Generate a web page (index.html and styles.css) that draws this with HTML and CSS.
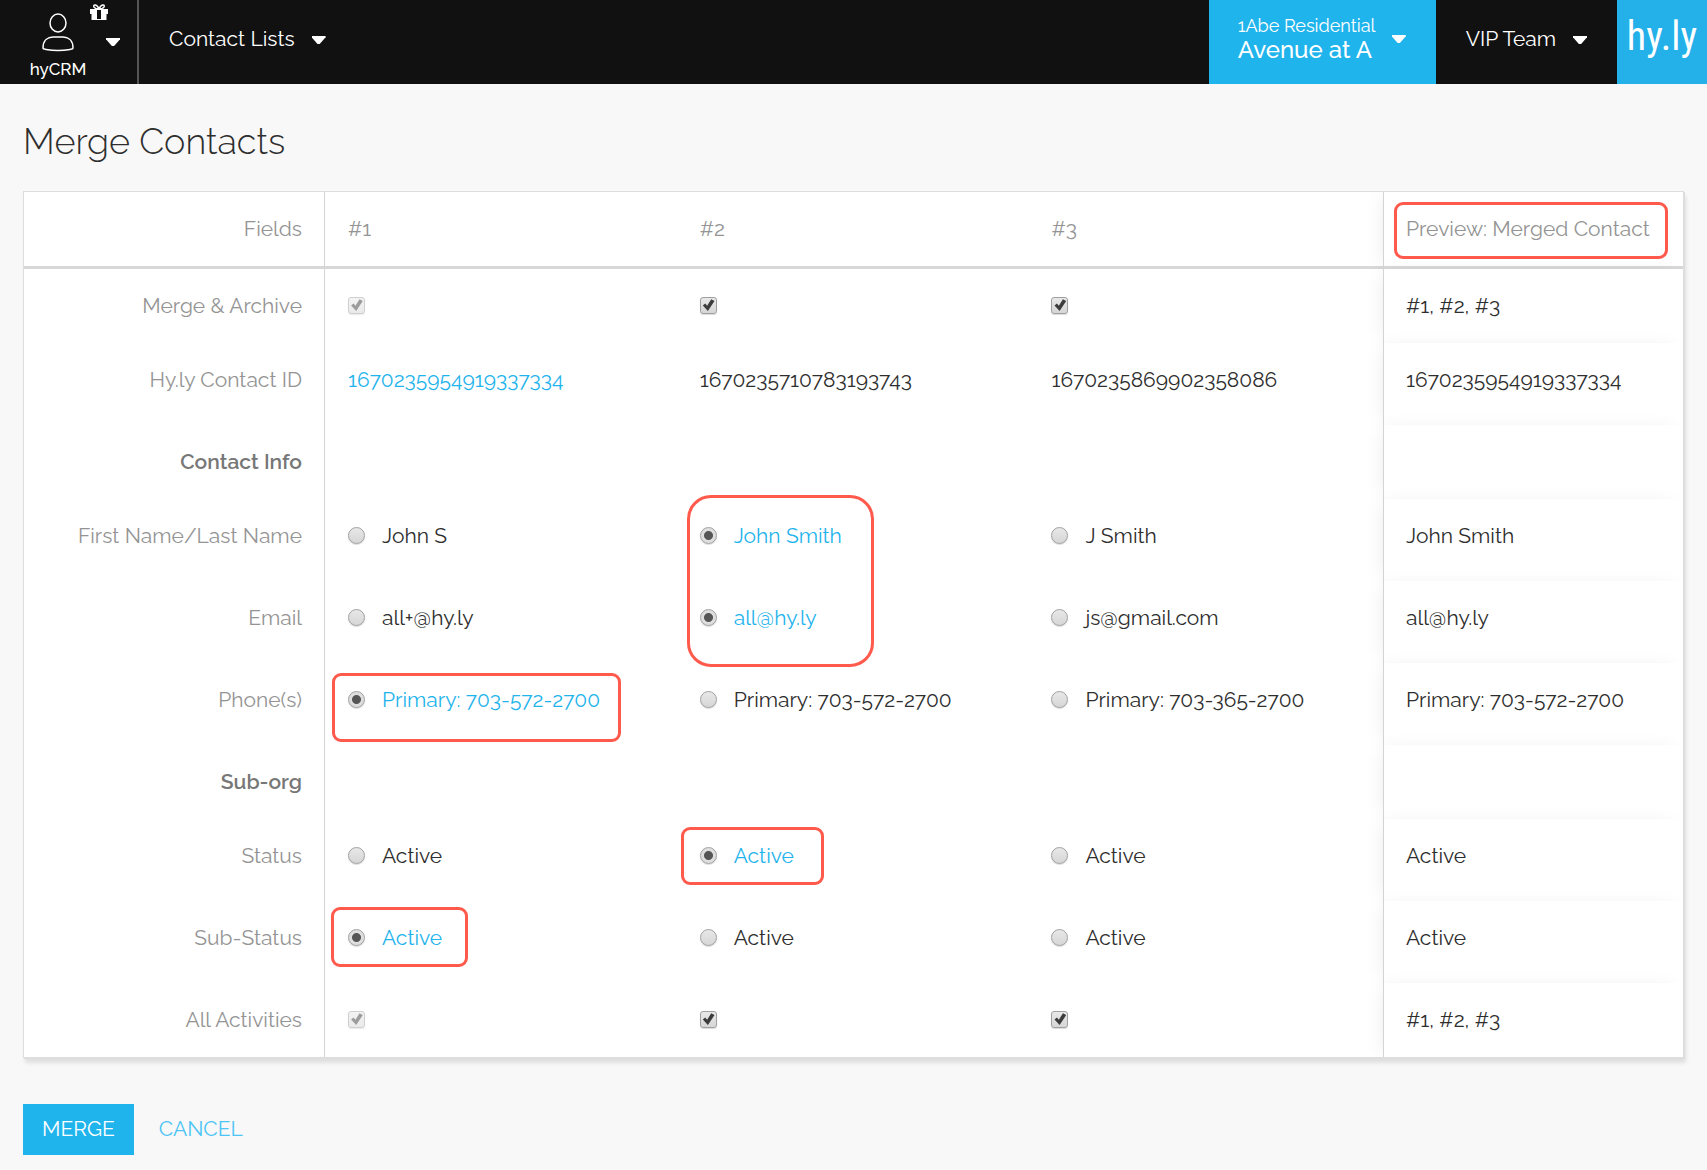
FILE: index.html
```html
<!DOCTYPE html>
<html lang="en">
<head>
    <meta charset="UTF-8">
    <meta name="viewport" content="width=device-width, initial-scale=1.0">
    <title>Merge Contacts</title>
    <link rel="stylesheet" href="styles.css">
</head>
<body>

    <header class="topbar">
        <button type="button" class="app-menu">
            <span class="app-name">
                <svg class="icon-user" viewBox="0 0 32 39" width="32" height="39">
                    <ellipse cx="16" cy="10" rx="8" ry="9"/>
                    <path d="M1 35C1 27 6 24 11 24H21C26 24 31 27 31 35Q31 36 28 36.500Q16 38.500 4 36.500Q1 36 1 35Z"/>
                </svg>
                hyCRM
            </span>
            <span class="app-side">
                <svg class="icon-gift" viewBox="0 0 18 16" width="18" height="16">
                    <path class="bow" d="M9 5C7 0 3 0 4 3Q5 5 9 5C11 0 15 0 14 3Q13 5 9 5Z"/>
                    <path d="M0 5H18V10H16.500V16H1.500V10H0Z"/>
                    <path class="ribbon" d="M7 6H11V15H7Z"/>
                </svg>
                <span class="caret"></span>
            </span>
        </button>
        <nav class="main-nav">
            <button type="button" class="nav-item">Contact Lists <span class="caret"></span></button>
        </nav>
        <button type="button" class="property">
            <span class="property-text">
                <span class="property-org">1Abe Residential</span>
                <span class="property-name">Avenue at A</span>
            </span>
            <span class="caret"></span>
        </button>
        <button type="button" class="nav-item team">VIP Team <span class="caret"></span></button>
        <a href="#" class="logo">hy.ly</a>
    </header>

    <main class="content">
        <h1>Merge Contacts</h1>

        <form>
            <div class="table-box">
                <table class="merge-table">
                    <colgroup>
                        <col class="col-fields">
                        <col class="col-contact">
                        <col class="col-contact">
                        <col>
                        <col class="col-preview">
                    </colgroup>
                    <thead>
                        <tr>
                            <th class="field">Fields</th>
                            <th>#1</th>
                            <th>#2</th>
                            <th>#3</th>
                            <th class="preview">Preview: Merged Contact<span class="mark mark-preview"></span></th>
                        </tr>
                    </thead>
                    <tbody>
                        <tr class="short">
                            <th class="field">Merge &amp; Archive</th>
                            <td><label><input type="checkbox" aria-label="Merge #1" checked disabled></label></td>
                            <td><label><input type="checkbox" aria-label="Merge #2" checked></label></td>
                            <td><label><input type="checkbox" aria-label="Merge #3" checked></label></td>
                            <td class="preview">#1, #2, #3</td>
                        </tr>
                        <tr>
                            <th class="field">Hy.ly Contact ID</th>
                            <td><a href="#">1670235954919337334</a></td>
                            <td>1670235710783193743</td>
                            <td>1670235869902358086</td>
                            <td class="preview">1670235954919337334</td>
                        </tr>
                        <tr class="short">
                            <th class="field section">Contact Info</th>
                            <td></td>
                            <td></td>
                            <td></td>
                            <td class="preview"></td>
                        </tr>
                        <tr>
                            <th class="field">First Name/Last Name</th>
                            <td><label><input type="radio" name="name"><span>John S</span></label></td>
                            <td class="marked"><label><input type="radio" name="name" checked><span>John Smith</span></label><span class="mark mark-name"></span></td>
                            <td><label><input type="radio" name="name"><span>J Smith</span></label></td>
                            <td class="preview">John Smith</td>
                        </tr>
                        <tr>
                            <th class="field">Email</th>
                            <td><label><input type="radio" name="email"><span>all+@hy.ly</span></label></td>
                            <td><label><input type="radio" name="email" checked><span>all@hy.ly</span></label></td>
                            <td><label><input type="radio" name="email"><span>js@gmail.com</span></label></td>
                            <td class="preview">all@hy.ly</td>
                        </tr>
                        <tr>
                            <th class="field">Phone(s)</th>
                            <td class="marked"><label><input type="radio" name="phone" checked><span>Primary: 703-572-2700</span></label><span class="mark mark-phone"></span></td>
                            <td><label><input type="radio" name="phone"><span>Primary: 703-572-2700</span></label></td>
                            <td><label><input type="radio" name="phone"><span>Primary: 703-365-2700</span></label></td>
                            <td class="preview">Primary: 703-572-2700</td>
                        </tr>
                        <tr class="short">
                            <th class="field section">Sub-org</th>
                            <td></td>
                            <td></td>
                            <td></td>
                            <td class="preview"></td>
                        </tr>
                        <tr>
                            <th class="field">Status</th>
                            <td><label><input type="radio" name="status"><span>Active</span></label></td>
                            <td class="marked"><label><input type="radio" name="status" checked><span>Active</span></label><span class="mark mark-status"></span></td>
                            <td><label><input type="radio" name="status"><span>Active</span></label></td>
                            <td class="preview">Active</td>
                        </tr>
                        <tr>
                            <th class="field">Sub-Status</th>
                            <td class="marked"><label><input type="radio" name="substatus" checked><span>Active</span></label><span class="mark mark-substatus"></span></td>
                            <td><label><input type="radio" name="substatus"><span>Active</span></label></td>
                            <td><label><input type="radio" name="substatus"><span>Active</span></label></td>
                            <td class="preview">Active</td>
                        </tr>
                        <tr class="short">
                            <th class="field">All Activities</th>
                            <td><label><input type="checkbox" aria-label="Activities #1" checked disabled></label></td>
                            <td><label><input type="checkbox" aria-label="Activities #2" checked></label></td>
                            <td><label><input type="checkbox" aria-label="Activities #3" checked></label></td>
                            <td class="preview">#1, #2, #3</td>
                        </tr>
                    </tbody>
                </table>
            </div>

            <div class="actions">
                <button type="submit" class="btn-merge">MERGE</button>
                <a href="#" class="btn-cancel">CANCEL</a>
            </div>
        </form>
    </main>

</body>
</html>
```

FILE: styles.css
```css
* {
    box-sizing: border-box;
}

body {
    margin: 0;
    background-color: #f8f8f8;
    color: #2e2e2e;
    font-family: Raleway, Lato, sans-serif;
    font-size: 21px;
    line-height: 30px;
}

a {
    color: #1fb4ec;
    text-decoration: none;
}

button {
    border: none;
    background: none;
    padding: 0;
    color: white;
    font: inherit;
    cursor: pointer;
}

/* Top bar */
.topbar {
    display: flex;
    height: 84px;
    background-color: #111;
}

.caret {
    width: 14px;
    height: 8px;
    background-color: white;
    clip-path: polygon(0 0, 100% 0, 100% 15%, 58% 100%, 42% 100%, 0 15%);
}

.app-menu {
    display: flex;
    width: 139px;
    padding-left: 30px;
    border-right: 2px solid #555;
}

.app-name {
    display: flex;
    flex-direction: column;
    align-items: center;
    width: 56px;
    padding-top: 13px;
    font-size: 17px;
    font-weight: 500;
    line-height: 34px;
}

.icon-user {
    flex: none;
    fill: none;
    stroke: white;
    stroke-width: 1.5;
}

.app-side {
    display: flex;
    flex-direction: column;
    align-items: flex-end;
    gap: 18px;
    width: 34px;
    padding-top: 4px;
}

.icon-gift {
    align-self: flex-start;
    margin-left: 4px;
    fill: white;
}

.icon-gift .bow {
    fill: none;
    stroke: white;
    stroke-width: 1.6;
}

.icon-gift .ribbon {
    fill: #111;
}

.main-nav {
    display: flex;
    flex: 1;
    padding-left: 30px;
}

.nav-item {
    display: flex;
    align-items: center;
    gap: 17px;
    padding-bottom: 6px;
}

.nav-item .caret {
    margin-top: 2px;
}

.property {
    display: flex;
    align-items: center;
    justify-content: space-between;
    width: 227px;
    padding: 0 30px 6px 29px;
    background-color: #1fb4ec;
}

.property-text {
    display: flex;
    flex-direction: column;
    padding-bottom: 2px;
    text-align: left;
}

.property-org {
    font-size: 18px;
    line-height: 24px;
}

.property-name {
    font-size: 24px;
    font-weight: 500;
    line-height: 24px;
}

.team {
    padding-left: 30px;
    padding-right: 30px;
}

.logo {
    width: 90px;
    background-color: #24b1ea;
    color: white;
    font-family: "Roboto Condensed", Roboto, sans-serif;
    font-size: 40px;
    line-height: 74px;
    text-align: center;
}

/* Page */
.content {
    padding: 35px 23px 15px;
}

h1 {
    margin: 0 0 28px;
    font-size: 36px;
    font-weight: 300;
    line-height: 44px;
}

.table-box {
    overflow: hidden;
    border: 1px solid #ddd;
    box-shadow: 1px 1px 0 #ddd, 2px 5px 4px rgba(0, 0, 0, 0.1);
}

.merge-table {
    width: 100%;
    table-layout: fixed;
    border-collapse: separate;
    border-spacing: 0;
}

.col-fields {
    width: 301px;
}

.col-contact {
    width: 21.2%;
}

.col-preview {
    width: 300px;
}

th,
td {
    height: 82px;
    padding: 22px 22px 30px 23px;
    background-color: white;
    font-weight: 400;
    text-align: left;
    vertical-align: top;
}

thead th {
    height: 77px;
    padding-bottom: 22px;
    border-bottom: 3px solid #d8d8d8;
    color: #949494;
}

.short th,
.short td {
    height: 74px;
    padding-bottom: 22px;
}

.field {
    border-right: 1px solid #d4d4d4;
    color: #949494;
    text-align: right;
}

th.section {
    color: #777;
    font-weight: 600;
}

.merge-table .preview {
    position: relative;
    padding-left: 22px;
    border-left: 1px solid #d4d4d4;
    box-shadow: -5px 0 18px -5px rgba(0, 0, 0, 0.08);
    white-space: nowrap;
}

/* Radios and checkboxes */
label {
    display: flex;
    align-items: center;
    gap: 17px;
    height: 30px;
}

input {
    appearance: none;
    flex: none;
    width: 17px;
    height: 17px;
    margin: 0 0 2px;
    border: 1px solid #a0a0a0;
    background: linear-gradient(#e8e8e8, #d6d6d6);
    box-shadow: 0 1px 1px rgba(0, 0, 0, 0.15);
}

input[type="radio"] {
    border-radius: 50%;
}

input[type="radio"]:checked {
    background: radial-gradient(circle, #555 0 4px, #dedede 5px);
}

input[type="radio"]:checked + span {
    color: #1fb4ec;
}

input[type="checkbox"] {
    border-radius: 3px;
}

input[type="checkbox"]:checked::after {
    content: "";
    display: block;
    width: 15px;
    height: 15px;
    background-color: #3c3c3c;
    clip-path: polygon(14% 54%, 30% 40%, 43% 55%, 70% 12%, 92% 24%, 48% 90%);
}

input:disabled {
    opacity: 0.5;
}

/* Highlight frames */
.marked {
    position: relative;
    z-index: 1;
}

.mark {
    position: absolute;
    border: 3px solid #ff5a4c;
    border-radius: 9px;
    pointer-events: none;
}

.mark-preview {
    top: 10px;
    left: 10px;
    width: 274px;
    height: 57px;
}

.mark-name {
    top: -4px;
    left: 10px;
    width: 187px;
    height: 172px;
    border-radius: 24px;
}

.mark-phone {
    top: 10px;
    left: 7px;
    width: 289px;
    height: 69px;
}

.mark-status {
    top: 8px;
    left: 4px;
    width: 143px;
    height: 58px;
}

.mark-substatus {
    top: 6px;
    left: 6px;
    width: 137px;
    height: 60px;
}

/* Buttons */
.actions {
    display: flex;
    align-items: center;
    gap: 25px;
    margin-top: 46px;
}

.btn-merge {
    height: 51px;
    padding: 0 19px 2px;
    background-color: #1fb4ec;
}

.btn-cancel {
    padding-bottom: 2px;
    color: #4cc4f5;
}
```
